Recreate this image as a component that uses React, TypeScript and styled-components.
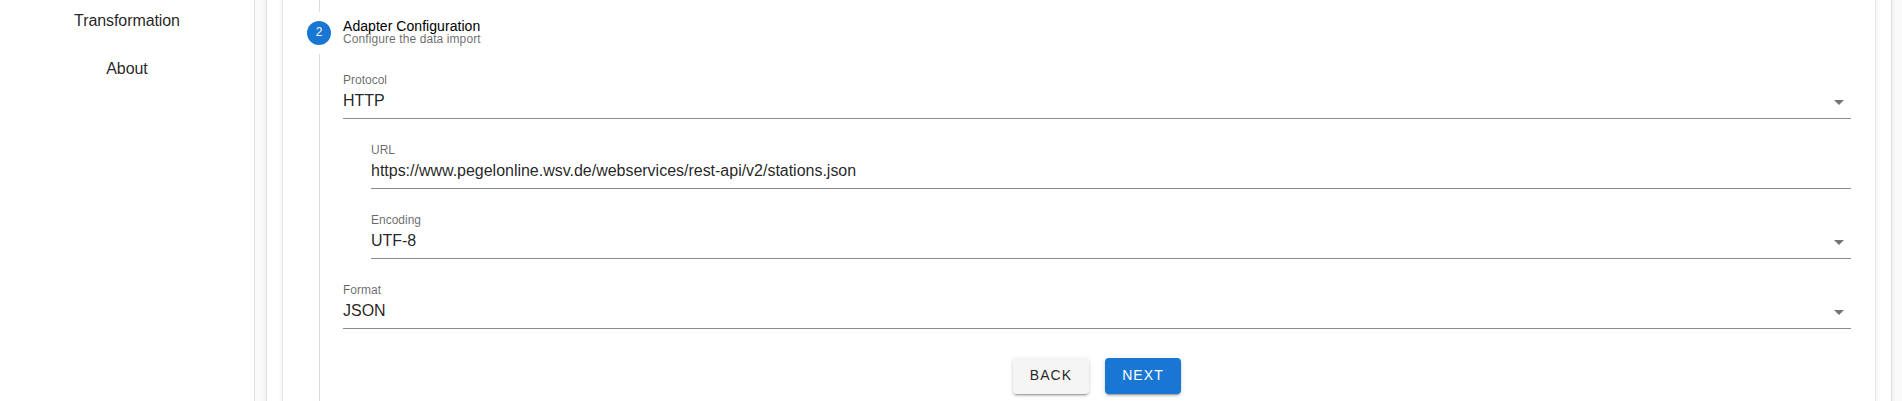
import React from "react";
import styled, { createGlobalStyle } from "styled-components";

const GlobalStyle = createGlobalStyle`
  *, *::before, *::after { box-sizing: border-box; }
  body {
    margin: 0;
    background: #fafafa;
    color: rgba(0, 0, 0, 0.87);
    font-family: "Liberation Sans", Arial, sans-serif;
    font-size: 16px;
    overflow: hidden;
  }
`;

const Page = styled.div`
  display: flex;
  height: 401px;
  overflow: hidden;
`;

const Sidebar = styled.nav`
  flex: 0 0 255px;
  background: #fff;
  border-right: 1px solid #e0e0e0;
  display: flex;
  flex-direction: column;
  align-items: center;
  padding-top: 9px;
  gap: 24px;
`;

const NavItem = styled.a`
  line-height: 24px;
  letter-spacing: -0.08px;
`;

const elevation = `box-shadow: 0 3px 1px -2px rgba(0, 0, 0, 0.2), 0 2px 2px 0 rgba(0, 0, 0, 0.14),
    0 1px 5px 0 rgba(0, 0, 0, 0.12);`;

const Main = styled.main`
  flex: 1;
  display: flex;
  padding: 0 11px 0 12px;
  margin: -20px 0;
`;

const Card = styled.section`
  flex: 1;
  display: flex;
  padding: 0 16px;
  background: #fff;
  ${elevation}
`;

const Stepper = styled.div`
  flex: 1;
  padding: 20px 24px;
  background: #fff;
  display: flex;
  gap: 12px;
  ${elevation}
`;

const Rail = styled.div`
  flex: 0 0 24px;
  display: flex;
  flex-direction: column;
  align-items: flex-start;
`;

const Line = styled.div<{ $height?: number }>`
  width: 1px;
  margin-left: 12px;
  ${(p) => (p.$height ? `height: ${p.$height}px;` : "flex: 1;")}
  background: #dcdcdc;
`;

const StepNumber = styled.span`
  width: 24px;
  height: 24px;
  margin: 9px 0;
  border-radius: 50%;
  background: #1976d2;
  color: #fff;
  font-size: 12px;
  line-height: 22px;
  text-align: center;
`;

const Content = styled.div`
  flex: 1;
  padding-top: 19px;
`;

const StepTitle = styled.div`
  color: #000;
  font-size: 14px;
  line-height: 14px;
  letter-spacing: 0.05px;
`;

const StepHint = styled.small`
  display: block;
  color: rgba(0, 0, 0, 0.6);
  font-size: 12px;
  line-height: 12px;
  letter-spacing: 0.09px;
`;

const Form = styled.form`
  padding-top: 27px;
`;

const FieldRoot = styled.div<{ $nested?: boolean }>`
  height: 47px;
  margin: 0 0 23px ${(p) => (p.$nested ? 28 : 0)}px;
  border-bottom: 1px solid #8c8c8c;
`;

const Label = styled.div`
  color: rgba(0, 0, 0, 0.6);
  font-size: 12px;
  line-height: 16px;
`;

const ValueRow = styled.div`
  display: flex;
  justify-content: space-between;
  height: 26px;
  line-height: 26px;
  letter-spacing: -0.015px;
`;

const Arrow = styled.svg`
  width: 24px;
  height: 24px;
  margin-top: 2px;
  fill: rgba(0, 0, 0, 0.54);
`;

const Actions = styled.div`
  display: flex;
  justify-content: center;
  gap: 16px;
  padding-top: 6px;
`;

const Button = styled.button<{ $primary?: boolean }>`
  width: 76px;
  height: 36px;
  padding: 0 0 2px;
  border: 0;
  border-radius: 4px;
  background: ${(p) => (p.$primary ? "#1976d2" : "#f5f5f5")};
  color: ${(p) => (p.$primary ? "#fff" : "rgba(0, 0, 0, 0.87)")};
  font: 14px "Liberation Sans", Arial, sans-serif;
  letter-spacing: 1.1px;
  ${elevation}
`;

type FieldProps = { label: string; value: string; nested?: boolean; select?: boolean };

const Field = ({ label, value, nested, select }: FieldProps) => (
  <FieldRoot $nested={nested}>
    <Label>{label}</Label>
    <ValueRow>
      <span>{value}</span>
      {select && (
        <Arrow viewBox="0 0 24 24">
          <path d="M7,10L12,15L17,10H7Z" />
        </Arrow>
      )}
    </ValueRow>
  </FieldRoot>
);

export default function App() {
  return (
    <>
      <GlobalStyle />
      <Page>
        <Sidebar>
          <NavItem>Transformation</NavItem>
          <NavItem>About</NavItem>
        </Sidebar>
        <Main>
          <Card>
            <Stepper>
              <Rail>
                <Line $height={12} />
                <StepNumber>2</StepNumber>
                <Line />
              </Rail>
              <Content>
                <StepTitle>Adapter Configuration</StepTitle>
                <StepHint>Configure the data import</StepHint>
                <Form>
                  <Field label="Protocol" value="HTTP" select />
                  <Field label="URL" value="https://www.pegelonline.wsv.de/webservices/rest-api/v2/stations.json" nested />
                  <Field label="Encoding" value="UTF-8" nested select />
                  <Field label="Format" value="JSON" select />
                  <Actions>
                    <Button type="button">BACK</Button>
                    <Button type="button" $primary>NEXT</Button>
                  </Actions>
                </Form>
              </Content>
            </Stepper>
          </Card>
        </Main>
      </Page>
    </>
  );
}
